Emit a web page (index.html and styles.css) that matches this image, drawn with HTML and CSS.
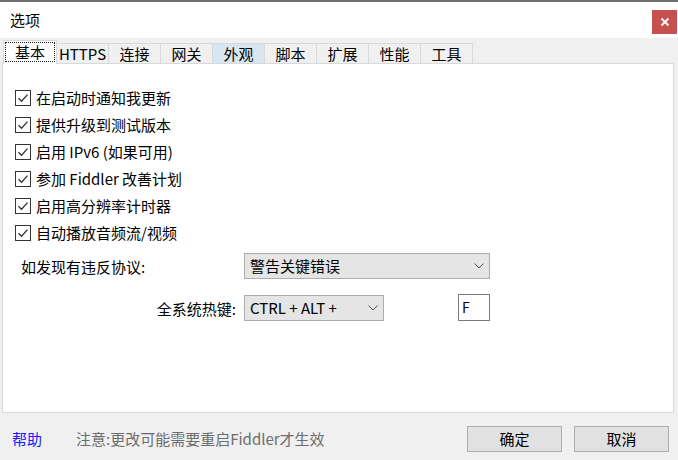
FILE: index.html
```html
<!DOCTYPE html>
<html lang="zh-CN">
<head>
<meta charset="utf-8">
<title>选项</title>
<link rel="stylesheet" href="styles.css">
</head>
<body>
<div class="window">
  <div class="titlebar">
    <span class="title">选项</span>
    <div class="close">
      <svg width="10" height="10" viewBox="0 0 10 10"><path d="M1.5 1.5 L8.5 8.5 M8.5 1.5 L1.5 8.5" stroke="#fff" stroke-width="1.8"/></svg>
    </div>
  </div>
  <div class="tabs">
    <div class="tab tab-active"><span class="focus">基本</span></div>
    <div class="tab">HTTPS</div>
    <div class="tab">连接</div>
    <div class="tab">网关</div>
    <div class="tab tab-hover">外观</div>
    <div class="tab">脚本</div>
    <div class="tab">扩展</div>
    <div class="tab">性能</div>
    <div class="tab">工具</div>
  </div>
  <div class="panel">
    <div class="checks">
      <label class="check"><span class="box"><svg width="16" height="16" viewBox="0 0 16 16"><rect x="0.5" y="0.5" width="15" height="15" fill="#fff" stroke="#333"/><path d="M3.5 8.2 L6.5 11.2 L12.5 4.6" fill="none" stroke="#333" stroke-width="1.3"/></svg></span>在启动时通知我更新</label>
      <label class="check"><span class="box"><svg width="16" height="16" viewBox="0 0 16 16"><rect x="0.5" y="0.5" width="15" height="15" fill="#fff" stroke="#333"/><path d="M3.5 8.2 L6.5 11.2 L12.5 4.6" fill="none" stroke="#333" stroke-width="1.3"/></svg></span>提供升级到测试版本</label>
      <label class="check"><span class="box"><svg width="16" height="16" viewBox="0 0 16 16"><rect x="0.5" y="0.5" width="15" height="15" fill="#fff" stroke="#333"/><path d="M3.5 8.2 L6.5 11.2 L12.5 4.6" fill="none" stroke="#333" stroke-width="1.3"/></svg></span>启用 IPv6 (如果可用)</label>
      <label class="check"><span class="box"><svg width="16" height="16" viewBox="0 0 16 16"><rect x="0.5" y="0.5" width="15" height="15" fill="#fff" stroke="#333"/><path d="M3.5 8.2 L6.5 11.2 L12.5 4.6" fill="none" stroke="#333" stroke-width="1.3"/></svg></span>参加 Fiddler 改善计划</label>
      <label class="check"><span class="box"><svg width="16" height="16" viewBox="0 0 16 16"><rect x="0.5" y="0.5" width="15" height="15" fill="#fff" stroke="#333"/><path d="M3.5 8.2 L6.5 11.2 L12.5 4.6" fill="none" stroke="#333" stroke-width="1.3"/></svg></span>启用高分辨率计时器</label>
      <label class="check"><span class="box"><svg width="16" height="16" viewBox="0 0 16 16"><rect x="0.5" y="0.5" width="15" height="15" fill="#fff" stroke="#333"/><path d="M3.5 8.2 L6.5 11.2 L12.5 4.6" fill="none" stroke="#333" stroke-width="1.3"/></svg></span>自动播放音频流/视频</label>
    </div>
    <div class="form">
      <div class="form-label">如发现有违反协议:</div>
      <div class="select select-wide"><span>警告关键错误</span><svg class="chev" width="10" height="6" viewBox="0 0 10 6"><path d="M0.5 0.5 L5 5 L9.5 0.5" fill="none" stroke="#555" stroke-width="1"/></svg></div>
      <div class="form-label form-label-right">全系统热键:</div>
      <div class="hotkey">
        <div class="select select-narrow"><span>CTRL + ALT +</span><svg class="chev" width="10" height="6" viewBox="0 0 10 6"><path d="M0.5 0.5 L5 5 L9.5 0.5" fill="none" stroke="#555" stroke-width="1"/></svg></div>
        <div class="keybox">F</div>
      </div>
    </div>
  </div>
  <div class="footer">
    <span class="help">帮助</span>
    <span class="note">注意:更改可能需要重启Fiddler才生效</span>
    <span class="spacer"></span>
    <div class="btn">确定</div>
    <div class="btn">取消</div>
  </div>
</div>
</body>
</html>
```
FILE: styles.css
```css
* { box-sizing: border-box; }
html, body {
  margin: 0;
  padding: 0;
  width: 678px;
  height: 460px;
  overflow: hidden;
  background: #f0f0f0;
  font-family: "Noto Sans CJK SC", "Noto Sans", sans-serif;
  font-size: 15px;
  color: #000;
}
.window {
  width: 678px;
  height: 460px;
  display: flex;
  flex-direction: column;
}
.titlebar {
  height: 38px;
  background: #fff;
  border-top: 2px solid #707070;
  display: flex;
  align-items: flex-start;
  padding-left: 10px;
}
.title {
  margin-top: 8px;
  line-height: 20px;
  font-size: 15px;
}
.close {
  margin-left: auto;
  margin-top: 8px;
  margin-right: 1px;
  width: 25px;
  height: 24px;
  background: #c75050;
  display: flex;
  align-items: center;
  justify-content: center;
}
.tabs {
  height: 25px;
  display: flex;
  align-items: flex-end;
  padding-left: 3px;
  position: relative;
  z-index: 1;
}
.tab {
  width: 53px;
  height: 20px;
  margin-left: -1px;
  border: 1px solid #d9d9d9;
  border-bottom: none;
  background: #f0f0f0;
  display: flex;
  align-items: center;
  justify-content: center;
  font-size: 15px;
  line-height: 18px;
  color: #000;
}
.tab:first-child { margin-left: 0; }
.tab-hover { background: #d8e6f2; }
.tab-active {
  height: 24px;
  margin-bottom: -1px;
  background: #fff;
  width: 54px;
  margin-right: -1px;
  padding-top: 1px;
  align-items: flex-start;
}
.tab-active + .tab { margin-left: 0; }
.focus {
  display: block;
  width: 50px;
  height: 20px;
  border: 1px dotted #222;
  text-align: center;
  line-height: 18px;
}
.panel {
  height: 350px;
  margin-left: 2px;
  margin-right: 4px;
  background: #fff;
  border: 1px solid #d9d9d9;
  padding: 20px 0 0 12px;
}
.checks {
  display: flex;
  flex-direction: column;
}
.check {
  height: 27px;
  display: flex;
  align-items: center;
  line-height: 20px;
  white-space: pre;
}
.box {
  width: 16px;
  height: 16px;
  margin-right: 5px;
  display: block;
}
.box svg { display: block; }
.form {
  margin-top: 7px;
  margin-left: 6px;
  display: grid;
  grid-template-columns: 223px auto;
  row-gap: 15px;
  align-items: center;
}
.form-label {
  line-height: 20px;
  padding-top: 2px;
}
.form-label-right {
  text-align: right;
  padding-right: 8px;
}
.select {
  height: 26px;
  background: #e5e5e5;
  border: 1px solid #adadad;
  display: flex;
  align-items: center;
  padding-left: 5px;
  padding-right: 5px;
  line-height: 20px;
}
.select .chev { margin-left: auto; }
.select-wide { width: 246px; }
.select-narrow { width: 140px; }
.hotkey {
  display: flex;
  align-items: center;
}
.keybox {
  margin-left: 74px;
  width: 32px;
  height: 27px;
  border: 1px solid #7a7a7a;
  background: #fff;
  padding-left: 3px;
  line-height: 24px;
  font-size: 14px;
}
.footer {
  flex: 1;
  display: flex;
  align-items: flex-start;
  padding-top: 13px;
  padding-left: 12px;
  padding-right: 9px;
}
.help {
  color: #1a1aff;
  line-height: 26px;
}
.note {
  margin-left: 34px;
  color: #6d6d6d;
  line-height: 26px;
}
.spacer { flex: 1; }
.btn {
  width: 95px;
  height: 26px;
  background: #e1e1e1;
  border: 1px solid #adadad;
  display: flex;
  align-items: center;
  justify-content: center;
  line-height: 20px;
  margin-left: 12px;
}
```
